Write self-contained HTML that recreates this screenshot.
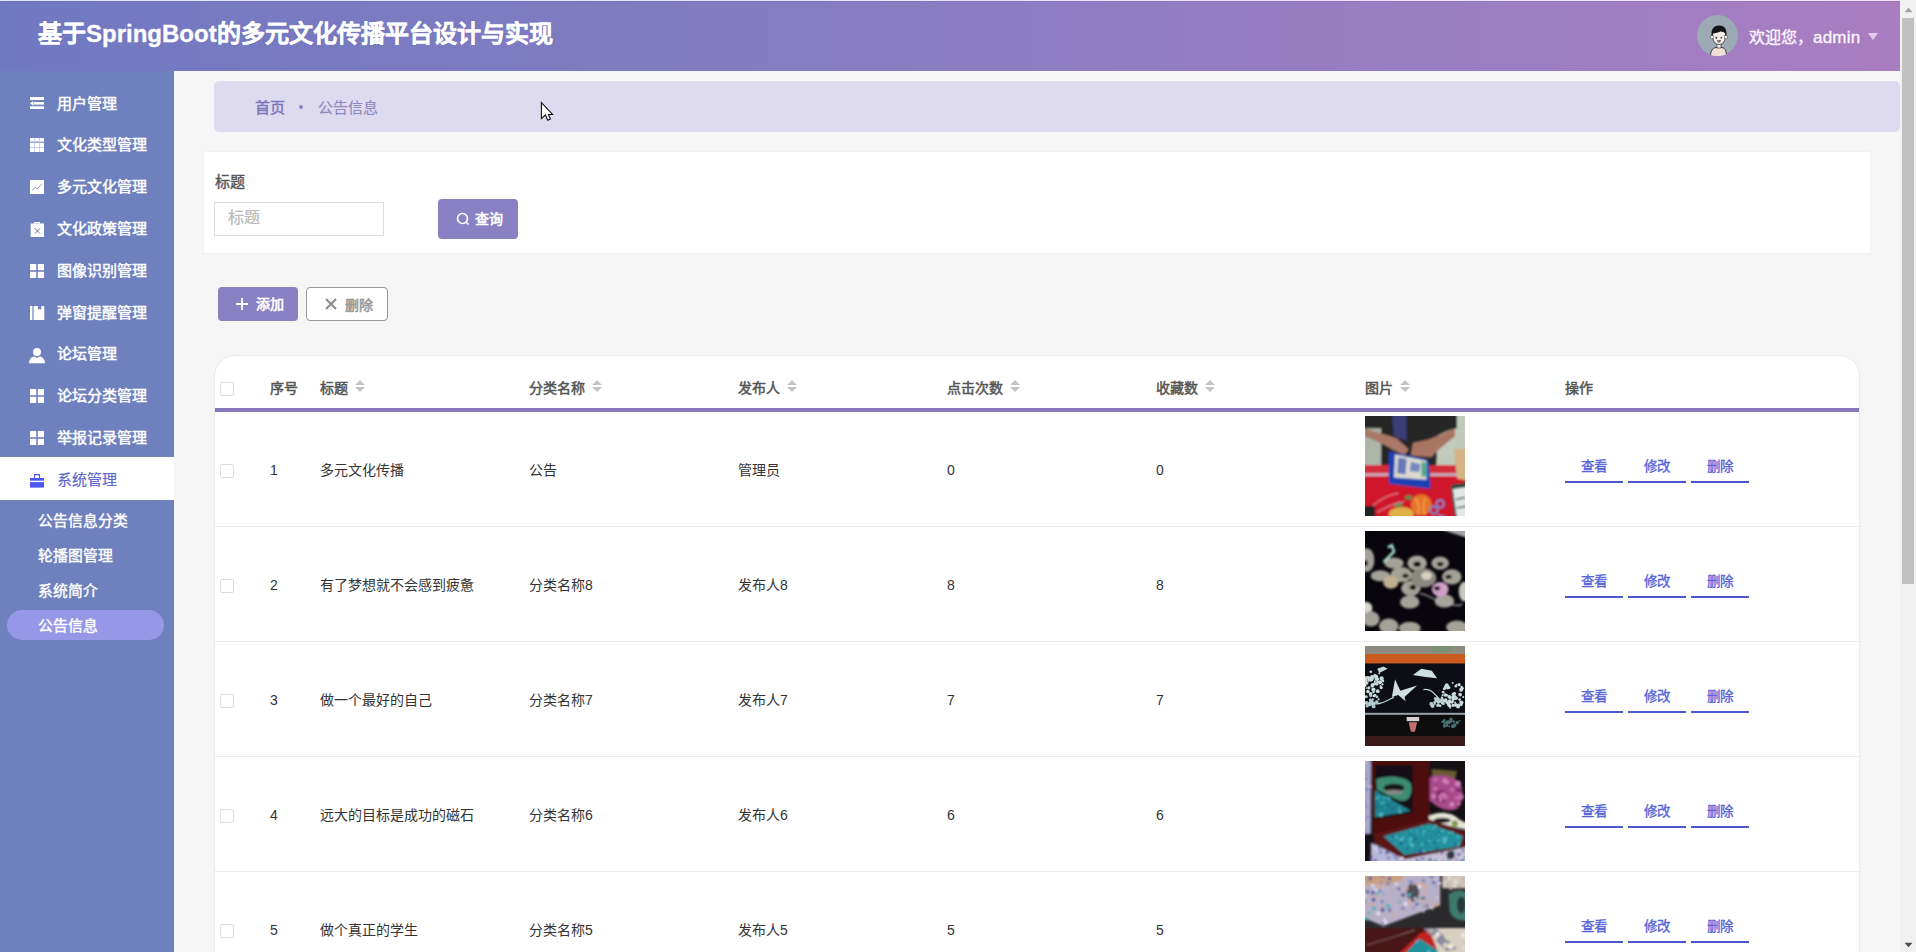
<!DOCTYPE html>
<html lang="zh-CN"><head><meta charset="utf-8">
<style>
*{margin:0;padding:0;box-sizing:border-box}
html,body{width:1916px;height:952px;overflow:hidden}
body{font-family:"Liberation Sans",sans-serif;background:#f6f6f6;position:relative;color:#333}
.a{position:absolute}
#hdr{left:0;top:0;width:1900px;height:71px;background:linear-gradient(90deg,#6f79c1 0%,#8a7dc2 50%,#a97ec1 100%);}
#topline{left:0;top:0;width:1916px;height:1px;background:linear-gradient(90deg,#e2e8fe,#f2e2fa)}
#topline2{left:0;top:1px;width:1900px;height:1px;background:rgba(40,30,80,0.08)}
#title{left:38px;top:14px;font-size:24px;font-weight:bold;-webkit-text-stroke:0.3px #fff;color:#fff;line-height:40px;white-space:nowrap}
#avatar{left:1697px;top:15px;width:41px;height:41px;border-radius:50%;background:#9caab6;overflow:hidden}
#welcome{left:1749px;top:27.5px;font-size:16px;color:#fff6ff;-webkit-text-stroke:0.3px #fff6ff;line-height:20px;white-space:nowrap;letter-spacing:0}
#caret{left:1868px;top:33px;width:0;height:0;border-left:5px solid transparent;border-right:5px solid transparent;border-top:7px solid #e2cdf0}
#side{left:0;top:71px;width:174px;height:881px;background:#6f80be}
.mi{position:absolute;left:0;width:174px;height:42px;color:#fff;font-size:15px;font-weight:normal;-webkit-text-stroke:0.45px #fff;line-height:42px}
.mi span{position:absolute;left:57px;top:0}
.mi svg{position:absolute;left:30px;top:14px}
.mi.act{color:#5a66cc;-webkit-text-stroke:0.15px #5a66cc}
#actbg{left:0;top:457px;width:174px;height:43px;background:#fff}
.sub{position:absolute;left:38px;color:#fff;font-size:14.8px;font-weight:normal;-webkit-text-stroke:0.4px #fff;line-height:20px;margin-top:0.8px}
#pill{left:7px;top:610px;width:157px;height:30px;border-radius:15px;background:#9598e6}
#scroll{left:1900px;top:0;width:16px;height:952px;background:#f1f1f1}
#thumb{left:1902px;top:18px;width:12px;height:566px;background:#c1c1c1}
#bc{left:214px;top:81px;width:1686px;height:51px;background:#dedbf1;border-radius:5px}
#bc1{left:255px;top:98px;font-size:15px;font-weight:normal;-webkit-text-stroke:0.5px #7f78b8;color:#7f78b8;line-height:20px}
#bcdot{left:299px;top:105px;width:4px;height:4px;border-radius:50%;background:#8a82bd}
#bc2{left:318px;top:98px;font-size:15px;-webkit-text-stroke:0.15px #8f88c0;color:#8f88c0;line-height:20px}
#search{left:204px;top:152px;width:1666px;height:101px;background:#fff;box-shadow:0 0 0 1px rgba(0,0,0,0.02)}
#lbl{left:215px;top:172px;font-size:15px;font-weight:normal;-webkit-text-stroke:0.4px #555;color:#555;line-height:20px}
#inp{left:214px;top:202px;width:170px;height:34px;border:1px solid #dcdcdc;background:#fff}
#inp span{position:absolute;left:13px;top:5px;font-size:16px;color:#b8b8b8;-webkit-text-stroke:0.2px #b8b8b8;line-height:20px}
.btn{position:absolute;border-radius:4px;font-size:14px;font-weight:normal;-webkit-text-stroke:0.6px currentColor;line-height:20px;white-space:nowrap}
#qbtn{left:438px;top:199px;width:80px;height:40px;background:#8a80c4;color:#fff}
#addbtn{left:218px;top:287px;width:80px;height:34px;background:#8a80c4;color:#fff}
#delbtn{left:306px;top:287px;width:82px;height:34px;background:#fff;border:1px solid #999;color:#999}
#tbl{left:215px;top:356px;width:1644px;height:600px;background:#fff;border-radius:20px 20px 0 0;box-shadow:0 0 0 1px rgba(0,0,0,0.035),0 0 3px rgba(0,0,0,0.04)}
#tline{left:215px;top:408px;width:1644px;height:4px;background:#8677c0}
.th{position:absolute;top:377.5px;font-size:14px;font-weight:normal;-webkit-text-stroke:0.5px #555;color:#555;line-height:20px;white-space:nowrap}
.sort{display:inline-block;vertical-align:top;margin-left:7px;margin-top:2.5px;-webkit-text-stroke:0}
.cb{position:absolute;left:220px;width:14px;height:14px;border:1px solid #dcdcdc;border-radius:2px;background:#fff}
.sep{position:absolute;left:215px;width:1644px;height:1px;background:#ebebeb}
.td{position:absolute;font-size:14px;color:#333;line-height:20px;white-space:nowrap}
.img{position:absolute;left:1365px;width:100px;height:100px;overflow:hidden}
.op{position:absolute;width:58px;height:24px;border-bottom:2px solid #4b58cc;color:#5865d8;font-size:13.5px;font-weight:normal;-webkit-text-stroke:0.35px #5865d8;text-align:center;line-height:16.5px}
</style></head><body>
<div id="hdr" class="a"></div>
<div id="topline" class="a"></div>
<div id="topline2" class="a"></div>
<div id="title" class="a">基于SpringBoot的多元文化传播平台设计与实现</div>
<div id="avatar" class="a"><svg width="42" height="42" viewBox="0 0 42 42"><path d="M13.5 42 C13.5 36 15.5 33 19 32.5 L25 32.5 C28 33 29.5 36 29.5 42Z" fill="#f2e0d8" stroke="#222" stroke-width="0.8"/><rect x="20" y="28.5" width="4" height="4.5" fill="#f6eee6" stroke="#222" stroke-width="0.6"/><path d="M15.5 16 L15.5 20 C15.5 26 18 29.5 22 29.5 C26 29.5 28.5 26 28.5 20 L28.5 16Z" fill="#f4ece4" stroke="#222" stroke-width="0.7"/><rect x="13.8" y="20.8" width="3" height="2.6" fill="#eef0ea" stroke="#333" stroke-width="0.4"/><rect x="27.2" y="20.8" width="3" height="2.6" fill="#eef0ea" stroke="#333" stroke-width="0.4"/><path d="M14.8 21.5 C13.5 14 17 10.5 22 10.5 C27 10.5 30.5 13.5 29.3 21.5 L28.3 18.5 C27 17 25 16.3 23.5 16.3 C21.5 17.8 18 18.2 16 18.5Z" fill="#141414"/><ellipse cx="19.3" cy="22.7" rx="0.9" ry="1" fill="#333"/><ellipse cx="24.3" cy="22.7" rx="0.9" ry="1" fill="#555"/><path d="M19.8 25.3 Q22 24.8 24.2 25.3 Q23.5 27.8 22 27.8 Q20.5 27.8 19.8 25.3Z" fill="#7a6e6a"/></svg></div>
<div id="welcome" class="a">欢迎您，<span style="font-size:17px;letter-spacing:0.2px">admin</span></div>
<div id="caret" class="a"></div>

<div id="side" class="a"></div>
<div id="actbg" class="a"></div>
<div class="mi" style="top:82.6px"><svg width="14" height="12" viewBox="0 0 14 12" style="top:14.4px"><rect x="0" y="0" width="14" height="3" fill="#fff"/><rect x="3.8" y="5" width="10.2" height="2.6" fill="#fff"/><path d="M0 6.3 L3.4 3.9 L3.4 8.7Z" fill="#fff"/><rect x="0" y="9.3" width="14" height="2.7" fill="#fff"/></svg><span>用户管理</span></div>
<div class="mi" style="top:124.4px"><svg width="14" height="14" viewBox="0 0 14 14"><rect width="14" height="14" fill="#fff"/><rect x="0" y="3.6" width="14" height="1.1" fill="#6f80be"/><rect x="4.2" y="0" width="0.7" height="14" fill="#b8c0e0"/><rect x="9.1" y="0" width="0.7" height="14" fill="#b8c0e0"/><rect x="0" y="9.2" width="14" height="0.7" fill="#b8c0e0"/></svg><span>文化类型管理</span></div>
<div class="mi" style="top:166.2px"><svg width="14" height="14" viewBox="0 0 14 14"><rect width="14" height="14" fill="#fff"/><path d="M2.3 10.3 L5.3 7.4 L7.3 8.8 L10.6 5.2" stroke="#8088a8" stroke-width="0.9" fill="none"/><circle cx="11.5" cy="4.2" r="0.6" fill="#8088a8"/></svg><span>多元文化管理</span></div>
<div class="mi" style="top:208.0px"><svg width="14" height="15" viewBox="0 0 14 15"><path d="M0.7 1.5 H4 V0 H10 V1.5 H14 V15 H0.7Z" fill="#fff"/><path d="M4.3 1.6 H9.7" stroke="#c8cce8" stroke-width="0.8"/><path d="M4.8 6.3 L10 11.6 M10 6.3 L4.8 11.6" stroke="#5a6070" stroke-width="0.9"/></svg><span>文化政策管理</span></div>
<div class="mi" style="top:249.8px"><svg width="14" height="14" viewBox="0 0 14 14"><g fill="#fff"><rect x="0" y="0" width="6.2" height="6.2"/><rect x="7.8" y="0" width="6.2" height="6.2"/><rect x="0" y="7.8" width="6.2" height="6.2"/><rect x="7.8" y="7.8" width="6.2" height="6.2"/></g></svg><span>图像识别管理</span></div>
<div class="mi" style="top:291.6px"><svg width="15" height="14" viewBox="0 0 15 14"><g fill="#fff"><rect x="0" y="0" width="2.4" height="14"/><path d="M3.6 0 H14.3 V14 H3.6Z"/></g><path d="M8 0 V4 L9.6 2.8 L11.2 4 V0Z" fill="#6f80be"/></svg><span>弹窗提醒管理</span></div>
<div class="mi" style="top:333.4px"><svg width="17" height="16" viewBox="0 0 17 16" style="left:29px;top:14.8px"><circle cx="8" cy="4" r="4" fill="#fff"/><path d="M0 15.2 C0 11 3 8.4 5.5 8.4 L8 10 L10.5 8.4 C13 8.4 16 11 16 15.2Z" fill="#fff"/></svg><span>论坛管理</span></div>
<div class="mi" style="top:375.2px"><svg width="14" height="14" viewBox="0 0 14 14"><g fill="#fff"><rect x="0" y="0" width="6.2" height="6.2"/><rect x="7.8" y="0" width="6.2" height="6.2"/><rect x="0" y="7.8" width="6.2" height="6.2"/><rect x="7.8" y="7.8" width="6.2" height="6.2"/></g></svg><span>论坛分类管理</span></div>
<div class="mi" style="top:417.0px"><svg width="14" height="14" viewBox="0 0 14 14"><g fill="#fff"><rect x="0" y="0" width="6.2" height="6.2"/><rect x="7.8" y="0" width="6.2" height="6.2"/><rect x="0" y="7.8" width="6.2" height="6.2"/><rect x="7.8" y="7.8" width="6.2" height="6.2"/></g></svg><span>举报记录管理</span></div>
<div class="mi act" style="top:458.8px"><svg width="14" height="14" viewBox="0 0 14 14" style="top:15.4px"><g fill="#4a58ee"><path d="M4 0 H10 V4 H9 V1.2 H5 V4 H4Z"/><rect x="0" y="4" width="14" height="2.7"/><rect x="0" y="8.1" width="14" height="5.5"/></g></svg><span>系统管理</span></div>
<div id="pill" class="a"></div>
<div class="sub" style="top:510px">公告信息分类</div>
<div class="sub" style="top:545px">轮播图管理</div>
<div class="sub" style="top:580px">系统简介</div>
<div class="sub" style="top:615px">公告信息</div>


<div id="scroll" class="a"></div>
<div id="thumb" class="a"></div>
<svg class="a" style="left:1904px;top:7px" width="9" height="6" viewBox="0 0 9 6"><path d="M0.5 5.2 L4.5 0.8 L8.5 5.2Z" fill="#a3a3a3"/></svg>
<svg class="a" style="left:1904px;top:942px" width="9" height="6" viewBox="0 0 9 6"><path d="M0.5 0.8 L4.5 5.2 L8.5 0.8Z" fill="#505050"/></svg>

<div id="bc" class="a"></div>
<div id="bc1" class="a">首页</div>
<div id="bcdot" class="a"></div>
<div id="bc2" class="a">公告信息</div>

<div id="search" class="a"></div>
<div id="lbl" class="a">标题</div>
<div id="inp" class="a"><span>标题</span></div>
<div id="qbtn" class="btn"><svg class="a" style="left:18px;top:13px" width="14" height="14" viewBox="0 0 14 14"><circle cx="6.5" cy="6.5" r="5" stroke="#fff" stroke-width="1.6" fill="none"/><path d="M10 10 L12.5 12.5" stroke="#fff" stroke-width="1.6"/></svg><span class="a" style="left:37px;top:9.5px">查询</span></div>
<div id="addbtn" class="btn"><svg class="a" style="left:17px;top:10px" width="14" height="14" viewBox="0 0 14 14"><path d="M7 1 V13 M1 7 H13" stroke="#fff" stroke-width="1.8"/></svg><span class="a" style="left:38px;top:7px">添加</span></div>
<div id="delbtn" class="btn"><svg class="a" style="left:18px;top:10px" width="12" height="12" viewBox="0 0 12 12"><path d="M1 1 L11 11 M11 1 L1 11" stroke="#8a8a8a" stroke-width="2"/></svg><span class="a" style="left:37.5px;top:6.5px">删除</span></div>

<div id="tbl" class="a"></div>
<div id="tline" class="a"></div>
<div class="cb" style="top:382px"></div>
<div class="th" style="left:270px">序号</div>
<div class="th" style="left:320px">标题<svg class="sort" width="10" height="13" viewBox="0 0 10 13"><path d="M5 0 L10 5 H0Z M0 7 H10 L5 12Z" fill="#c4c4c4"/></svg></div>
<div class="th" style="left:529px">分类名称<svg class="sort" width="10" height="13" viewBox="0 0 10 13"><path d="M5 0 L10 5 H0Z M0 7 H10 L5 12Z" fill="#c4c4c4"/></svg></div>
<div class="th" style="left:738px">发布人<svg class="sort" width="10" height="13" viewBox="0 0 10 13"><path d="M5 0 L10 5 H0Z M0 7 H10 L5 12Z" fill="#c4c4c4"/></svg></div>
<div class="th" style="left:947px">点击次数<svg class="sort" width="10" height="13" viewBox="0 0 10 13"><path d="M5 0 L10 5 H0Z M0 7 H10 L5 12Z" fill="#c4c4c4"/></svg></div>
<div class="th" style="left:1156px">收藏数<svg class="sort" width="10" height="13" viewBox="0 0 10 13"><path d="M5 0 L10 5 H0Z M0 7 H10 L5 12Z" fill="#c4c4c4"/></svg></div>
<div class="th" style="left:1365px">图片<svg class="sort" width="10" height="13" viewBox="0 0 10 13"><path d="M5 0 L10 5 H0Z M0 7 H10 L5 12Z" fill="#c4c4c4"/></svg></div>
<div class="th" style="left:1565px">操作</div>
<div class="cb" style="top:464px"></div>
<div class="td" style="left:270px;top:460px">1</div>
<div class="td" style="left:320px;top:460px">多元文化传播</div>
<div class="td" style="left:529px;top:460px">公告</div>
<div class="td" style="left:738px;top:460px">管理员</div>
<div class="td" style="left:947px;top:460px">0</div>
<div class="td" style="left:1156px;top:460px">0</div>
<div class="img" style="top:416px"><svg width="100" height="100" viewBox="0 0 100 100"><defs><filter id="b1" x="-10%" y="-10%" width="120%" height="120%"><feGaussianBlur stdDeviation="0.8"/></filter></defs><rect width="100" height="100" fill="#262626"/><g transform="translate(-2.5,-2.5) scale(1.05)"><g filter="url(#b1)"><path d="M72 0 H100 V52 H70Z" fill="#c2cabe"/><path d="M0 14 H18 V50 H0Z" fill="#aeb6ac"/><path d="M0 0 H90 V14 C80 16 70 22 62 26 L58 50 H18 V14 L0 14Z" fill="#252525"/><path d="M28 0 H42 V26 L30 22Z" fill="#3c3c78"/><path d="M2 14 C12 18 24 20 33 24 L44 34 L40 40 L28 34 C18 28 8 24 2 22Z" fill="#a87868"/><path d="M88 14 C80 18 70 22 62 25 L48 28 L46 40 L66 42 C70 36 80 28 88 22Z" fill="#a87464"/><path d="M0 49 H100 V100 H0Z" fill="#d0182a"/><path d="M0 49 H95 V57 H0Z" fill="#d42a3a"/><path d="M0 57 H96 V59.5 H0Z" fill="#c8b0c0"/><path d="M87 34 L96 33 L100 36 V64 L90 62Z" fill="#d4b486"/><path d="M25 36 L63 44 L65 72 L25 67Z" fill="#1c40b4"/><path d="M31 39 L61 45 L61 63 L30 61Z" fill="#dcdcd0"/><path d="M34 42 L42 43 L41 58 L33 57Z" fill="#6878b8"/><path d="M46 46 L55 48 L54 56 L45 55Z" fill="#7888c0"/><path d="M56 46 L61 47 L61 60 L56 60Z" fill="#50a890"/><circle cx="56" cy="87" r="10" fill="#e67426"/><path d="M50 80 Q56 90 52 97 M60 80 Q56 90 60 97" stroke="#f0a050" stroke-width="1.5" fill="none"/><ellipse cx="37" cy="96" rx="12" ry="7" fill="#e0b048"/><ellipse cx="34" cy="87" rx="4" ry="2" fill="#50904a"/><ellipse cx="44" cy="80" rx="3.5" ry="2" fill="#50904a"/><circle cx="74" cy="86" r="3.5" fill="none" stroke="#6090e0" stroke-width="1.6"/><circle cx="68" cy="92" r="3.5" fill="none" stroke="#6090e0" stroke-width="1.6"/><path d="M72 97 L80 100" stroke="#6090e0" stroke-width="2"/><path d="M84 68 L100 66 V100 H88Z" fill="#1e4a40"/><path d="M86 72 L100 70 V100 H90Z" fill="#e4e8e4"/><path d="M89 82 L98 80 M90 90 L100 88" stroke="#2a5a48" stroke-width="1.5"/><rect x="0" y="88" width="12" height="12" fill="#202020"/><path d="M10 88 C16 82 24 78 34 76 M14 94 C22 90 28 86 40 84" stroke="#e8a0b0" stroke-width="0.9" fill="none"/></g></g></svg>
</div>
<div class="op" style="left:1565px;top:459px">查看</div>
<div class="op" style="left:1628px;top:459px">修改</div>
<div class="op" style="left:1691px;top:459px">删除</div>
<div class="sep" style="top:526px"></div>
<div class="cb" style="top:579px"></div>
<div class="td" style="left:270px;top:575px">2</div>
<div class="td" style="left:320px;top:575px">有了梦想就不会感到疲惫</div>
<div class="td" style="left:529px;top:575px">分类名称8</div>
<div class="td" style="left:738px;top:575px">发布人8</div>
<div class="td" style="left:947px;top:575px">8</div>
<div class="td" style="left:1156px;top:575px">8</div>
<div class="img" style="top:531px">
<svg width="100" height="100" viewBox="0 0 100 100"><defs><filter id="b2" x="-10%" y="-10%" width="120%" height="120%"><feGaussianBlur stdDeviation="0.9"/></filter></defs><rect width="100" height="100" fill="#08060c"/><g transform="translate(-2.5,-2.5) scale(1.05)"><g filter="url(#b2)"><path d="M72 0 L100 0 L100 9Z" fill="#a9a3ac"/><g fill="#a4a298"><ellipse cx="52" cy="33" rx="9.3" ry="7.3"/><ellipse cx="74" cy="33" rx="8.3" ry="6.3"/><ellipse cx="37" cy="44" rx="10.3" ry="7.3"/><ellipse cx="85" cy="46" rx="9.3" ry="7.3"/><ellipse cx="46" cy="57" rx="9.3" ry="7.3"/><ellipse cx="58" cy="47" rx="12.3" ry="9.3" fill="#8a8880"/><ellipse cx="45" cy="70" rx="9.3" ry="6.3"/><ellipse cx="78" cy="69" rx="9.3" ry="6.3"/><ellipse cx="4" cy="30" rx="7.3" ry="11.3"/><ellipse cx="17" cy="45" rx="9.3" ry="5.3"/><ellipse cx="30" cy="33" rx="9.3" ry="5.3"/><ellipse cx="27" cy="51" rx="7.3" ry="6.3" fill="#c0b090"/><ellipse cx="3" cy="76" rx="6.3" ry="6.3" fill="#d8d8d0"/><ellipse cx="8" cy="86" rx="8.3" ry="7.3"/><ellipse cx="25" cy="93" rx="9.3" ry="7.3"/><ellipse cx="45" cy="95" rx="10.3" ry="6.3"/><ellipse cx="90" cy="94" rx="10.3" ry="6.3"/><ellipse cx="97" cy="60" rx="5.3" ry="9.3" fill="#c8c8c0"/></g><ellipse cx="74" cy="58" rx="8" ry="7" fill="#d0a0c8"/><ellipse cx="61" cy="45" rx="5" ry="4" fill="#d8d0c0"/><path d="M24 18 L28 16 L30 22 L20 32" stroke="#a8e0d0" stroke-width="2.5" fill="none"/><g fill="#08060c"><ellipse cx="52" cy="34" rx="3.5" ry="2.5"/><ellipse cx="74" cy="34" rx="3" ry="2"/><ellipse cx="41" cy="45" rx="3" ry="2"/><ellipse cx="82" cy="46" rx="3" ry="2"/><ellipse cx="48" cy="56" rx="3" ry="2.5"/><ellipse cx="71" cy="57" rx="3" ry="2"/><ellipse cx="2" cy="33" rx="3" ry="3"/></g><path d="M55 62 C62 62 66 68 75 70 C85 72 90 75 95 72" stroke="#b0a8b0" stroke-width="1.2" fill="none"/></g></g></svg>
</div>
<div class="op" style="left:1565px;top:574px">查看</div>
<div class="op" style="left:1628px;top:574px">修改</div>
<div class="op" style="left:1691px;top:574px">删除</div>
<div class="sep" style="top:641px"></div>
<div class="cb" style="top:694px"></div>
<div class="td" style="left:270px;top:690px">3</div>
<div class="td" style="left:320px;top:690px">做一个最好的自己</div>
<div class="td" style="left:529px;top:690px">分类名称7</div>
<div class="td" style="left:738px;top:690px">发布人7</div>
<div class="td" style="left:947px;top:690px">7</div>
<div class="td" style="left:1156px;top:690px">7</div>
<div class="img" style="top:646px"><svg width="100" height="100" viewBox="0 0 100 100"><defs><filter id="b3" x="-10%" y="-10%" width="120%" height="120%"><feGaussianBlur stdDeviation="0.6"/></filter></defs><rect width="100" height="100" fill="#101010"/><g transform="translate(-2.5,-2.5) scale(1.05)"><g filter="url(#b3)"><rect x="0" y="0" width="100" height="11" fill="#8a8c80"/><ellipse cx="75" cy="4" rx="10" ry="5" fill="#7a9070"/><rect x="0" y="10" width="100" height="10" fill="#cc5a1e"/><rect x="0" y="19" width="100" height="48" fill="#0c0e14"/><rect x="0" y="66" width="100" height="2" fill="#9aa0a8"/><rect x="0" y="68" width="100" height="20" fill="#0a0a0c"/><rect x="0" y="88" width="100" height="12" fill="#3a1a1a"/><circle cx="10.5" cy="46.3" r="1.2" fill="#c8dcdc"/><circle cx="4.0" cy="32.5" r="0.9" fill="#c8dcdc"/><circle cx="19.0" cy="38.9" r="1.1" fill="#c8dcdc"/><circle cx="11.0" cy="49.9" r="1.4" fill="#c8dcdc"/><circle cx="13.3" cy="31.4" r="1.6" fill="#c8dcdc"/><circle cx="14.5" cy="45.4" r="1.8" fill="#c8dcdc"/><circle cx="1.7" cy="36.5" r="1.6" fill="#c8dcdc"/><circle cx="17.8" cy="42.0" r="1.5" fill="#c8dcdc"/><circle cx="9.6" cy="39.4" r="1.8" fill="#c8dcdc"/><circle cx="1.9" cy="39.7" r="1.9" fill="#c8dcdc"/><circle cx="7.9" cy="26.9" r="1.3" fill="#c8dcdc"/><circle cx="11.9" cy="31.0" r="1.9" fill="#c8dcdc"/><circle cx="11.8" cy="36.0" r="1.0" fill="#c8dcdc"/><circle cx="12.0" cy="49.5" r="1.3" fill="#c8dcdc"/><circle cx="6.6" cy="33.8" r="1.4" fill="#c8dcdc"/><circle cx="6.0" cy="42.2" r="1.5" fill="#c8dcdc"/><circle cx="1.9" cy="32.3" r="1.6" fill="#c8dcdc"/><circle cx="18.2" cy="33.3" r="2.0" fill="#c8dcdc"/><circle cx="8.4" cy="34.4" r="1.8" fill="#c8dcdc"/><circle cx="19.2" cy="35.5" r="1.5" fill="#c8dcdc"/><circle cx="9.1" cy="33.4" r="1.8" fill="#c8dcdc"/><circle cx="5.8" cy="35.5" r="0.9" fill="#c8dcdc"/><circle cx="16.0" cy="28.5" r="0.9" fill="#c8dcdc"/><circle cx="11.8" cy="31.3" r="1.0" fill="#c8dcdc"/><circle cx="7.7" cy="47.9" r="1.8" fill="#c8dcdc"/><circle cx="17.2" cy="40.5" r="0.9" fill="#c8dcdc"/><circle cx="9.0" cy="31.9" r="1.9" fill="#c8dcdc"/><circle cx="16.6" cy="37.0" r="2.0" fill="#c8dcdc"/><circle cx="9.2" cy="40.4" r="1.5" fill="#c8dcdc"/><circle cx="13.7" cy="38.9" r="1.3" fill="#c8dcdc"/><circle cx="7.5" cy="35.5" r="0.9" fill="#c8dcdc"/><circle cx="13.4" cy="33.6" r="2.0" fill="#c8dcdc"/><circle cx="14.4" cy="34.0" r="1.4" fill="#c8dcdc"/><circle cx="2.4" cy="36.8" r="1.5" fill="#c8dcdc"/><circle cx="3.0" cy="34.7" r="1.9" fill="#c8dcdc"/><circle cx="4.0" cy="37.7" r="1.7" fill="#c8dcdc"/><circle cx="10.4" cy="43.8" r="2.0" fill="#c8dcdc"/><circle cx="3.1" cy="36.9" r="0.8" fill="#c8dcdc"/><circle cx="3.8" cy="42.4" r="0.8" fill="#c8dcdc"/><circle cx="4.3" cy="31.9" r="0.9" fill="#c8dcdc"/><circle cx="5.6" cy="32.6" r="1.6" fill="#c8dcdc"/><circle cx="5.1" cy="45.8" r="1.7" fill="#c8dcdc"/><circle cx="11.8" cy="38.3" r="1.6" fill="#c8dcdc"/><circle cx="14.2" cy="36.8" r="1.3" fill="#c8dcdc"/><circle cx="5.8" cy="34.7" r="1.2" fill="#c8dcdc"/><circle cx="6.3" cy="58.0" r="1.5" fill="#b0c8c8"/><circle cx="6.6" cy="58.2" r="1.7" fill="#b0c8c8"/><circle cx="13.6" cy="55.7" r="1.7" fill="#b0c8c8"/><circle cx="6.8" cy="57.3" r="1.8" fill="#b0c8c8"/><circle cx="8.2" cy="57.2" r="1.3" fill="#b0c8c8"/><circle cx="7.3" cy="53.6" r="1.2" fill="#b0c8c8"/><circle cx="4.4" cy="59.7" r="1.3" fill="#b0c8c8"/><circle cx="9.7" cy="53.4" r="1.2" fill="#b0c8c8"/><circle cx="3.6" cy="50.5" r="1.3" fill="#b0c8c8"/><circle cx="8.4" cy="56.7" r="1.4" fill="#b0c8c8"/><circle cx="10.6" cy="59.9" r="1.8" fill="#b0c8c8"/><circle cx="9.5" cy="57.5" r="1.8" fill="#b0c8c8"/><circle cx="3.6" cy="50.9" r="1.2" fill="#b0c8c8"/><circle cx="10.6" cy="57.1" r="1.8" fill="#b0c8c8"/><circle cx="7.4" cy="58.1" r="1.3" fill="#b0c8c8"/><circle cx="3.9" cy="56.7" r="1.9" fill="#b0c8c8"/><circle cx="8.2" cy="55.2" r="1.9" fill="#b0c8c8"/><circle cx="13.8" cy="50.9" r="1.3" fill="#b0c8c8"/><circle cx="15.3" cy="53.2" r="1.1" fill="#b0c8c8"/><circle cx="7.8" cy="49.6" r="1.6" fill="#b0c8c8"/><circle cx="80.3" cy="49.3" r="1.2" fill="#c8dcdc"/><circle cx="86.3" cy="52.6" r="1.5" fill="#c8dcdc"/><circle cx="83.6" cy="61.1" r="0.9" fill="#c8dcdc"/><circle cx="93.9" cy="44.1" r="1.9" fill="#c8dcdc"/><circle cx="95.0" cy="42.6" r="1.5" fill="#c8dcdc"/><circle cx="96.0" cy="50.9" r="1.0" fill="#c8dcdc"/><circle cx="83.1" cy="59.7" r="1.4" fill="#c8dcdc"/><circle cx="76.1" cy="56.5" r="1.5" fill="#c8dcdc"/><circle cx="83.1" cy="54.8" r="1.8" fill="#c8dcdc"/><circle cx="75.7" cy="51.6" r="1.2" fill="#c8dcdc"/><circle cx="88.7" cy="58.4" r="1.8" fill="#c8dcdc"/><circle cx="91.0" cy="59.9" r="1.9" fill="#c8dcdc"/><circle cx="89.7" cy="39.1" r="0.8" fill="#c8dcdc"/><circle cx="78.4" cy="41.4" r="0.9" fill="#c8dcdc"/><circle cx="85.3" cy="55.9" r="1.4" fill="#c8dcdc"/><circle cx="79.2" cy="53.9" r="1.7" fill="#c8dcdc"/><circle cx="88.1" cy="50.0" r="1.0" fill="#c8dcdc"/><circle cx="87.7" cy="51.8" r="2.0" fill="#c8dcdc"/><circle cx="87.7" cy="47.6" r="1.4" fill="#c8dcdc"/><circle cx="83.6" cy="55.9" r="1.2" fill="#c8dcdc"/><circle cx="80.7" cy="42.5" r="1.2" fill="#c8dcdc"/><circle cx="88.2" cy="56.2" r="0.9" fill="#c8dcdc"/><circle cx="76.8" cy="46.4" r="1.3" fill="#c8dcdc"/><circle cx="89.7" cy="52.2" r="1.2" fill="#c8dcdc"/><circle cx="77.8" cy="43.2" r="1.3" fill="#c8dcdc"/><circle cx="88.9" cy="40.7" r="1.3" fill="#c8dcdc"/><circle cx="80.5" cy="56.1" r="1.6" fill="#c8dcdc"/><circle cx="77.5" cy="55.0" r="1.4" fill="#c8dcdc"/><circle cx="86.3" cy="58.9" r="1.6" fill="#c8dcdc"/><circle cx="92.5" cy="53.4" r="1.3" fill="#c8dcdc"/><circle cx="94.4" cy="41.4" r="1.2" fill="#c8dcdc"/><circle cx="94.3" cy="43.2" r="1.1" fill="#c8dcdc"/><circle cx="82.7" cy="50.8" r="1.8" fill="#c8dcdc"/><circle cx="80.2" cy="39.7" r="1.8" fill="#c8dcdc"/><circle cx="81.1" cy="40.6" r="1.5" fill="#c8dcdc"/><circle cx="93.0" cy="55.7" r="0.8" fill="#c8dcdc"/><circle cx="92.4" cy="58.7" r="0.9" fill="#c8dcdc"/><circle cx="88.5" cy="51.8" r="1.9" fill="#c8dcdc"/><circle cx="86.5" cy="51.2" r="1.8" fill="#c8dcdc"/><circle cx="93.8" cy="58.1" r="1.6" fill="#c8dcdc"/><circle cx="92.0" cy="39.2" r="1.5" fill="#c8dcdc"/><circle cx="86.5" cy="48.3" r="1.7" fill="#c8dcdc"/><circle cx="76.2" cy="49.2" r="0.9" fill="#c8dcdc"/><circle cx="85.9" cy="37.5" r="0.9" fill="#c8dcdc"/><circle cx="82.2" cy="58.2" r="1.8" fill="#c8dcdc"/><circle cx="86.2" cy="54.6" r="1.1" fill="#c8dcdc"/><circle cx="78.4" cy="42.7" r="1.3" fill="#c8dcdc"/><circle cx="81.4" cy="55.5" r="1.2" fill="#c8dcdc"/><circle cx="83.6" cy="51.4" r="1.4" fill="#c8dcdc"/><circle cx="93.0" cy="48.7" r="1.7" fill="#c8dcdc"/><circle cx="91.1" cy="58.8" r="1.7" fill="#c8dcdc"/><circle cx="82.3" cy="42.2" r="1.4" fill="#c8dcdc"/><circle cx="79.0" cy="40.5" r="1.0" fill="#c8dcdc"/><circle cx="94.3" cy="56.2" r="1.9" fill="#c8dcdc"/><circle cx="78.7" cy="49.1" r="1.7" fill="#c8dcdc"/><circle cx="73.4" cy="59.1" r="1.0" fill="#b8d0d0"/><circle cx="68.6" cy="55.7" r="1.1" fill="#b8d0d0"/><circle cx="69.2" cy="52.5" r="1.2" fill="#b8d0d0"/><circle cx="70.7" cy="54.2" r="1.8" fill="#b8d0d0"/><circle cx="68.9" cy="55.9" r="1.1" fill="#b8d0d0"/><circle cx="77.1" cy="57.5" r="1.3" fill="#b8d0d0"/><circle cx="74.0" cy="59.4" r="1.2" fill="#b8d0d0"/><circle cx="72.4" cy="55.5" r="2.0" fill="#b8d0d0"/><circle cx="66.2" cy="57.5" r="1.4" fill="#b8d0d0"/><circle cx="75.6" cy="53.2" r="1.5" fill="#b8d0d0"/><circle cx="65.5" cy="57.5" r="1.8" fill="#b8d0d0"/><circle cx="66.6" cy="59.4" r="2.0" fill="#b8d0d0"/><circle cx="68.8" cy="57.4" r="1.1" fill="#b8d0d0"/><circle cx="70.7" cy="53.1" r="2.0" fill="#b8d0d0"/><circle cx="74.1" cy="55.3" r="1.0" fill="#b8d0d0"/><circle cx="71.8" cy="58.8" r="1.6" fill="#b8d0d0"/><circle cx="76.7" cy="53.4" r="1.1" fill="#b8d0d0"/><circle cx="74.6" cy="55.1" r="1.3" fill="#b8d0d0"/><circle cx="83.6" cy="75.1" r="0.9" fill="#4a7070"/><circle cx="86.9" cy="74.3" r="1.2" fill="#4a7070"/><circle cx="75.7" cy="74.5" r="0.8" fill="#4a7070"/><circle cx="80.3" cy="78.1" r="1.4" fill="#4a7070"/><circle cx="86.2" cy="78.8" r="1.9" fill="#4a7070"/><circle cx="77.6" cy="77.8" r="0.9" fill="#4a7070"/><circle cx="82.5" cy="79.1" r="0.9" fill="#4a7070"/><circle cx="92.6" cy="73.5" r="0.9" fill="#4a7070"/><circle cx="90.2" cy="75.2" r="1.7" fill="#4a7070"/><circle cx="84.3" cy="74.1" r="1.6" fill="#4a7070"/><circle cx="78.0" cy="73.1" r="1.1" fill="#4a7070"/><circle cx="84.3" cy="72.1" r="1.6" fill="#4a7070"/><circle cx="80.8" cy="75.8" r="1.4" fill="#4a7070"/><circle cx="78.1" cy="78.6" r="1.6" fill="#4a7070"/><circle cx="80.1" cy="75.4" r="1.6" fill="#4a7070"/><circle cx="81.1" cy="75.0" r="1.9" fill="#4a7070"/><circle cx="82.1" cy="75.1" r="1.9" fill="#4a7070"/><circle cx="87.9" cy="77.6" r="1.7" fill="#4a7070"/><circle cx="77.1" cy="74.4" r="1.6" fill="#4a7070"/><circle cx="78.2" cy="76.5" r="1.0" fill="#4a7070"/><path d="M31 34 L36 45 L52 40 L40 51 L41 55 L34 49 L28 51Z" fill="#d0e0e0"/><path d="M48 30 L56 24 L66 26 L71 33 L60 32Z" fill="#d0e0e0"/><path d="M14 24 L20 22 L24 24 L16 28Z" fill="#c0d8d8"/><path d="M6 56 C15 60 22 55 30 51" stroke="#b8d0d0" stroke-width="1.3" fill="none"/><path d="M58 44 C66 42 70 50 75 55" stroke="#b8d0d0" stroke-width="1.3" fill="none"/><rect x="42" y="70" width="12" height="4" fill="#d8d0d0"/><path d="M44 75 L52 75 L50 84 L46 84Z" fill="#c07070"/></g></g></svg></div>
<div class="op" style="left:1565px;top:689px">查看</div>
<div class="op" style="left:1628px;top:689px">修改</div>
<div class="op" style="left:1691px;top:689px">删除</div>
<div class="sep" style="top:756px"></div>
<div class="cb" style="top:809px"></div>
<div class="td" style="left:270px;top:805px">4</div>
<div class="td" style="left:320px;top:805px">远大的目标是成功的磁石</div>
<div class="td" style="left:529px;top:805px">分类名称6</div>
<div class="td" style="left:738px;top:805px">发布人6</div>
<div class="td" style="left:947px;top:805px">6</div>
<div class="td" style="left:1156px;top:805px">6</div>
<div class="img" style="top:761px"><svg width="100" height="100" viewBox="0 0 100 100"><defs><filter id="b4" x="-10%" y="-10%" width="120%" height="120%"><feGaussianBlur stdDeviation="0.8"/></filter></defs><rect width="100" height="100" fill="#141014"/><g transform="translate(-2.5,-2.5) scale(1.05)"><g filter="url(#b4)"><rect x="0" y="0" width="8" height="72" fill="#a8a8cc"/><path d="M8 2 L64 0 L64 60 L10 72Z" fill="#4e1010"/><path d="M12 6 L48 6 L48 52 L12 58Z" fill="#121014"/><path d="M66 10 L90 12 L88 20 L66 18Z" fill="#6a5a30"/><path d="M13 20 C20 16 42 16 46 24 C48 34 44 42 36 40 C28 38 20 32 14 30Z" fill="#3e8c72"/><ellipse cx="30" cy="28" rx="10" ry="4" fill="#181818"/><ellipse cx="30" cy="32" rx="9" ry="2" fill="#8a8a88"/><path d="M12 30 L46 50 L12 56Z" fill="#1f8290"/><path d="M64 18 C70 14 85 16 92 22 C97 30 96 42 90 48 C80 52 70 46 64 40Z" fill="#a84a8a"/><ellipse cx="75" cy="36" rx="6" ry="6" fill="#7a2a60"/><path d="M63 55 C70 50 85 50 92 58 L100 62 L100 68 L64 60Z" fill="#e8e4d8"/><ellipse cx="76" cy="59" rx="8" ry="2.5" fill="#1a1a1a"/><circle cx="88" cy="62" r="3" fill="#7a9a40"/><path d="M10 72 L64 58 L100 70 L100 88 L40 96 L12 82Z" fill="#5a1414"/><path d="M20 74 L64 62 L96 74 L92 84 L40 92Z" fill="#24909c"/><path d="M8 80 L40 96 L40 100 L8 100Z" fill="#b8b8d8"/><path d="M40 96 L100 84 L100 100 L40 100Z" fill="#c8c0d8"/><circle cx="69.5" cy="64.2" r="1.1" fill="#60c8d0"/><circle cx="51.8" cy="69.2" r="1.2" fill="#40b8c8"/><circle cx="37.0" cy="80.8" r="1.5" fill="#2a5a9a"/><circle cx="62.3" cy="66.0" r="1.0" fill="#40b8c8"/><circle cx="63.4" cy="78.8" r="1.3" fill="#40b8c8"/><circle cx="64.2" cy="81.2" r="1.0" fill="#40b8c8"/><circle cx="62.9" cy="80.6" r="1.1" fill="#2a5a9a"/><circle cx="79.1" cy="76.0" r="1.5" fill="#60c8d0"/><circle cx="42.8" cy="85.8" r="1.3" fill="#1a6a80"/><circle cx="57.6" cy="72.3" r="1.0" fill="#40b8c8"/><circle cx="29.0" cy="74.5" r="1.4" fill="#1a6a80"/><circle cx="90.9" cy="74.7" r="1.6" fill="#40b8c8"/><circle cx="78.1" cy="79.2" r="1.5" fill="#60c8d0"/><circle cx="45.8" cy="72.5" r="1.1" fill="#2a5a9a"/><circle cx="40.5" cy="82.9" r="0.7" fill="#60c8d0"/><circle cx="82.5" cy="70.5" r="1.0" fill="#60c8d0"/><circle cx="49.7" cy="88.1" r="0.7" fill="#2a5a9a"/><circle cx="50.5" cy="70.3" r="0.7" fill="#2a5a9a"/><circle cx="85.7" cy="70.4" r="1.0" fill="#60c8d0"/><circle cx="71.9" cy="73.4" r="0.8" fill="#40b8c8"/><circle cx="37.7" cy="76.5" r="1.2" fill="#60c8d0"/><circle cx="60.6" cy="80.3" r="0.9" fill="#1a6a80"/><circle cx="72.5" cy="77.5" r="1.2" fill="#40b8c8"/><circle cx="54.7" cy="88.1" r="1.6" fill="#2a5a9a"/><circle cx="50.3" cy="73.8" r="1.1" fill="#2a5a9a"/><circle cx="27.7" cy="72.9" r="0.6" fill="#1a6a80"/><circle cx="66.7" cy="66.5" r="0.9" fill="#60c8d0"/><circle cx="65.8" cy="76.2" r="0.7" fill="#2a5a9a"/><circle cx="56.8" cy="64.6" r="0.7" fill="#60c8d0"/><circle cx="76.3" cy="76.4" r="1.3" fill="#40b8c8"/><circle cx="47.5" cy="82.7" r="1.5" fill="#60c8d0"/><circle cx="72.9" cy="69.8" r="1.0" fill="#1a6a80"/><circle cx="47.0" cy="68.7" r="1.1" fill="#60c8d0"/><circle cx="68.4" cy="80.4" r="1.4" fill="#1a6a80"/><circle cx="76.2" cy="68.8" r="1.1" fill="#60c8d0"/><circle cx="80.0" cy="76.2" r="0.8" fill="#60c8d0"/><circle cx="47.7" cy="68.6" r="0.8" fill="#1a6a80"/><circle cx="45.7" cy="76.5" r="1.6" fill="#40b8c8"/><circle cx="56.4" cy="81.6" r="1.4" fill="#40b8c8"/><circle cx="49.5" cy="83.3" r="0.8" fill="#1a6a80"/><circle cx="53.0" cy="81.1" r="0.7" fill="#2a5a9a"/><circle cx="55.2" cy="84.3" r="0.7" fill="#1a6a80"/><circle cx="70.0" cy="72.5" r="1.1" fill="#1a6a80"/><circle cx="36.2" cy="77.0" r="1.4" fill="#60c8d0"/><circle cx="39.7" cy="74.6" r="0.7" fill="#60c8d0"/><circle cx="88.2" cy="81.9" r="1.4" fill="#2a5a9a"/><circle cx="58.8" cy="88.2" r="1.4" fill="#40b8c8"/><circle cx="30.8" cy="80.6" r="0.7" fill="#40b8c8"/><circle cx="44.8" cy="77.6" r="1.2" fill="#40b8c8"/><circle cx="27.4" cy="75.6" r="0.6" fill="#40b8c8"/><circle cx="53.7" cy="80.4" r="1.1" fill="#1a6a80"/><circle cx="72.6" cy="75.6" r="1.1" fill="#2a5a9a"/><circle cx="58.6" cy="69.4" r="1.1" fill="#60c8d0"/><circle cx="35.4" cy="75.4" r="1.0" fill="#2a5a9a"/><circle cx="70.9" cy="85.5" r="1.5" fill="#1a6a80"/><circle cx="91.4" cy="81.3" r="1.0" fill="#60c8d0"/><circle cx="50.3" cy="76.6" r="1.6" fill="#1a6a80"/><circle cx="32.3" cy="74.9" r="1.1" fill="#60c8d0"/><circle cx="52.0" cy="72.7" r="0.7" fill="#60c8d0"/><circle cx="45.2" cy="80.7" r="1.1" fill="#40b8c8"/><circle cx="15.8" cy="53.9" r="0.8" fill="#40b0c0"/><circle cx="14.9" cy="37.1" r="1.5" fill="#40b0c0"/><circle cx="17.1" cy="53.9" r="1.2" fill="#5ac0c8"/><circle cx="23.1" cy="37.3" r="1.4" fill="#40b0c0"/><circle cx="23.5" cy="44.4" r="1.5" fill="#1a6a80"/><circle cx="18.2" cy="54.2" r="1.2" fill="#5ac0c8"/><circle cx="18.4" cy="42.3" r="1.5" fill="#40b0c0"/><circle cx="34.4" cy="46.9" r="1.3" fill="#5ac0c8"/><circle cx="29.2" cy="47.9" r="1.6" fill="#1a6a80"/><circle cx="18.8" cy="52.9" r="1.3" fill="#40b0c0"/><circle cx="25.8" cy="39.0" r="0.7" fill="#40b0c0"/><circle cx="12.5" cy="46.3" r="1.5" fill="#1a6a80"/><circle cx="20.2" cy="37.6" r="1.1" fill="#40b0c0"/><circle cx="24.4" cy="38.6" r="1.6" fill="#1a6a80"/><circle cx="22.5" cy="39.3" r="0.6" fill="#1a6a80"/><circle cx="14.9" cy="37.3" r="1.3" fill="#40b0c0"/><circle cx="12.8" cy="37.9" r="0.8" fill="#5ac0c8"/><circle cx="17.3" cy="53.2" r="1.4" fill="#5ac0c8"/><circle cx="25.2" cy="38.5" r="1.6" fill="#40b0c0"/><circle cx="21.7" cy="46.1" r="0.7" fill="#5ac0c8"/><circle cx="37.0" cy="51.1" r="0.7" fill="#5ac0c8"/><circle cx="35.3" cy="50.7" r="1.3" fill="#5ac0c8"/><circle cx="13.4" cy="46.6" r="1.6" fill="#1a6a80"/><circle cx="33.3" cy="46.3" r="1.3" fill="#1a6a80"/><circle cx="21.0" cy="41.9" r="0.7" fill="#5ac0c8"/><circle cx="24.8" cy="94.9" r="1.1" fill="#4a50a0"/><circle cx="9.5" cy="92.7" r="0.8" fill="#6a70b8"/><circle cx="12.7" cy="85.1" r="1.3" fill="#e8e0f0"/><circle cx="23.4" cy="89.7" r="1.6" fill="#4a50a0"/><circle cx="30.1" cy="93.5" r="0.9" fill="#6a70b8"/><circle cx="17.1" cy="89.3" r="1.4" fill="#6a70b8"/><circle cx="14.4" cy="99.6" r="1.5" fill="#4a50a0"/><circle cx="24.2" cy="99.9" r="1.6" fill="#e8e0f0"/><circle cx="14.7" cy="98.9" r="0.8" fill="#6a70b8"/><circle cx="10.9" cy="94.9" r="0.9" fill="#e8e0f0"/><circle cx="12.2" cy="96.4" r="1.1" fill="#4a50a0"/><circle cx="23.7" cy="89.0" r="0.9" fill="#4a50a0"/><circle cx="21.3" cy="87.5" r="0.7" fill="#e8e0f0"/><circle cx="8.1" cy="95.0" r="1.4" fill="#4a50a0"/><circle cx="8.4" cy="94.8" r="0.9" fill="#4a50a0"/><circle cx="20.6" cy="100.0" r="1.2" fill="#e8e0f0"/><circle cx="37.6" cy="95.1" r="1.5" fill="#e8e0f0"/><circle cx="11.3" cy="96.7" r="0.9" fill="#4a50a0"/><circle cx="16.0" cy="85.3" r="1.1" fill="#4a50a0"/><circle cx="32.7" cy="95.7" r="1.0" fill="#4a50a0"/><circle cx="37.2" cy="98.8" r="1.1" fill="#6a70b8"/><circle cx="10.6" cy="98.7" r="1.0" fill="#6a70b8"/><circle cx="32.1" cy="92.9" r="0.9" fill="#4a50a0"/><circle cx="13.5" cy="88.3" r="0.9" fill="#e8e0f0"/><circle cx="31.6" cy="99.5" r="0.9" fill="#6a70b8"/><circle cx="70.0" cy="97.0" r="1.2" fill="#3a8a98"/><circle cx="94.4" cy="99.9" r="1.0" fill="#e8e0f0"/><circle cx="88.6" cy="87.2" r="0.6" fill="#3a8a98"/><circle cx="63.0" cy="95.9" r="0.8" fill="#6a70b8"/><circle cx="56.7" cy="99.5" r="0.7" fill="#e8e0f0"/><circle cx="45.6" cy="98.3" r="1.0" fill="#3a8a98"/><circle cx="88.9" cy="99.5" r="0.7" fill="#3a8a98"/><circle cx="82.6" cy="98.3" r="1.1" fill="#3a8a98"/><circle cx="95.6" cy="97.2" r="1.5" fill="#3a8a98"/><circle cx="80.9" cy="99.1" r="1.3" fill="#3a8a98"/><circle cx="45.1" cy="96.4" r="0.6" fill="#e8e0f0"/><circle cx="54.0" cy="98.7" r="1.2" fill="#6a70b8"/><circle cx="97.7" cy="94.0" r="1.1" fill="#3a8a98"/><circle cx="75.0" cy="90.2" r="0.8" fill="#4a50a0"/><circle cx="67.6" cy="99.3" r="1.2" fill="#e8e0f0"/><circle cx="54.8" cy="99.4" r="1.3" fill="#6a70b8"/><circle cx="93.1" cy="94.4" r="0.7" fill="#e8e0f0"/><circle cx="80.0" cy="98.8" r="0.8" fill="#4a50a0"/><circle cx="81.7" cy="95.5" r="1.0" fill="#3a8a98"/><circle cx="51.9" cy="96.8" r="1.3" fill="#4a50a0"/><circle cx="52.3" cy="99.5" r="0.9" fill="#e8e0f0"/><circle cx="85.6" cy="88.7" r="1.6" fill="#3a8a98"/><circle cx="76.6" cy="98.3" r="1.1" fill="#4a50a0"/><circle cx="96.9" cy="86.3" r="1.0" fill="#e8e0f0"/><circle cx="64.9" cy="95.4" r="0.8" fill="#3a8a98"/><circle cx="93.9" cy="98.1" r="1.3" fill="#4a50a0"/><circle cx="95.9" cy="89.3" r="0.8" fill="#3a8a98"/><circle cx="61.1" cy="99.3" r="0.7" fill="#e8e0f0"/><circle cx="62.8" cy="96.3" r="0.9" fill="#3a8a98"/><circle cx="45.3" cy="95.3" r="0.8" fill="#3a8a98"/><circle cx="64.6" cy="97.0" r="1.4" fill="#4a50a0"/><circle cx="76.3" cy="89.8" r="0.9" fill="#4a50a0"/><circle cx="55.7" cy="95.5" r="0.9" fill="#6a70b8"/><circle cx="57.8" cy="95.5" r="1.2" fill="#4a50a0"/><circle cx="68.5" cy="99.3" r="1.6" fill="#3a8a98"/><circle cx="87.4" cy="98.6" r="1.4" fill="#e8e0f0"/><circle cx="95.7" cy="86.9" r="1.4" fill="#6a70b8"/><circle cx="89.4" cy="96.4" r="1.2" fill="#6a70b8"/><circle cx="91.7" cy="91.4" r="1.4" fill="#4a50a0"/><circle cx="70.7" cy="90.3" r="0.8" fill="#3a8a98"/><circle cx="0.5" cy="2.4" r="0.9" fill="#e8e0f0"/><circle cx="1.3" cy="30.7" r="0.6" fill="#4a50a0"/><circle cx="2.1" cy="6.1" r="0.6" fill="#e8e0f0"/><circle cx="7.9" cy="70.0" r="0.6" fill="#4a50a0"/><circle cx="3.3" cy="44.7" r="1.0" fill="#6a70b8"/><circle cx="4.3" cy="55.7" r="1.0" fill="#e8e0f0"/><circle cx="2.4" cy="40.8" r="0.8" fill="#6a70b8"/><circle cx="2.1" cy="31.6" r="0.6" fill="#4a50a0"/><circle cx="1.2" cy="63.7" r="0.9" fill="#e8e0f0"/><circle cx="0.5" cy="18.1" r="0.7" fill="#6a70b8"/><circle cx="1.9" cy="58.2" r="1.0" fill="#4a50a0"/><circle cx="0.8" cy="34.2" r="1.1" fill="#e8e0f0"/><circle cx="7.3" cy="2.9" r="0.7" fill="#4a50a0"/><circle cx="0.4" cy="43.2" r="1.1" fill="#4a50a0"/><circle cx="7.4" cy="26.8" r="1.1" fill="#e8e0f0"/><circle cx="4.8" cy="55.8" r="1.0" fill="#4a50a0"/><circle cx="0.8" cy="42.9" r="0.9" fill="#4a50a0"/><circle cx="0.3" cy="24.5" r="0.5" fill="#e8e0f0"/><circle cx="0.3" cy="52.7" r="1.1" fill="#4a50a0"/><circle cx="6.6" cy="29.4" r="0.8" fill="#6a70b8"/><circle cx="2.5" cy="14.6" r="1.1" fill="#6a70b8"/><circle cx="3.9" cy="29.4" r="1.1" fill="#6a70b8"/><circle cx="4.4" cy="46.0" r="0.6" fill="#4a50a0"/><circle cx="3.2" cy="19.5" r="1.2" fill="#6a70b8"/><circle cx="2.5" cy="68.6" r="0.7" fill="#6a70b8"/><circle cx="93.2" cy="30.4" r="1.5" fill="#7a2a60"/><circle cx="85.3" cy="29.7" r="2.1" fill="#c86aa8"/><circle cx="78.3" cy="22.7" r="1.7" fill="#c86aa8"/><circle cx="79.2" cy="22.9" r="1.5" fill="#d080b8"/><circle cx="77.1" cy="35.2" r="2.9" fill="#d080b8"/><circle cx="80.6" cy="22.4" r="1.9" fill="#d080b8"/><circle cx="69.7" cy="20.0" r="2.1" fill="#c86aa8"/><circle cx="74.4" cy="36.2" r="2.5" fill="#c86aa8"/><circle cx="93.8" cy="36.6" r="2.7" fill="#c86aa8"/><circle cx="85.1" cy="43.7" r="2.4" fill="#d080b8"/><circle cx="91.9" cy="42.9" r="1.8" fill="#c86aa8"/><circle cx="69.2" cy="28.8" r="1.7" fill="#d080b8"/><circle cx="90.9" cy="23.8" r="2.8" fill="#d080b8"/><circle cx="67.9" cy="36.0" r="2.3" fill="#d080b8"/><circle cx="89.7" cy="37.5" r="2.0" fill="#c86aa8"/><circle cx="78.0" cy="37.8" r="2.2" fill="#7a2a60"/><circle cx="78.7" cy="36.6" r="2.7" fill="#c86aa8"/><circle cx="90.7" cy="30.0" r="1.6" fill="#7a2a60"/><circle cx="78.2" cy="20.8" r="2.2" fill="#d080b8"/><circle cx="74.4" cy="39.6" r="1.6" fill="#d080b8"/><ellipse cx="84" cy="92" rx="4" ry="4" fill="#303040"/></g></g></svg></div>
<div class="op" style="left:1565px;top:804px">查看</div>
<div class="op" style="left:1628px;top:804px">修改</div>
<div class="op" style="left:1691px;top:804px">删除</div>
<div class="sep" style="top:871px"></div>
<div class="cb" style="top:924px"></div>
<div class="td" style="left:270px;top:920px">5</div>
<div class="td" style="left:320px;top:920px">做个真正的学生</div>
<div class="td" style="left:529px;top:920px">分类名称5</div>
<div class="td" style="left:738px;top:920px">发布人5</div>
<div class="td" style="left:947px;top:920px">5</div>
<div class="td" style="left:1156px;top:920px">5</div>
<div class="img" style="top:876px"><svg width="100" height="100" viewBox="0 0 100 100"><defs><filter id="b5" x="-10%" y="-10%" width="120%" height="120%"><feGaussianBlur stdDeviation="0.8"/></filter></defs><rect width="100" height="100" fill="#2a2a2c"/><g transform="translate(-2.5,-2.5) scale(1.05)"><g filter="url(#b5)"><path d="M0 0 L74 0 L74 30 L20 50 L0 42Z" fill="#b8b0c8"/><path d="M0 0 L40 0 L35 8 L0 12Z" fill="#c8a080"/><ellipse cx="48" cy="18" rx="6" ry="9" fill="#505050"/><rect x="76" y="0" width="24" height="14" fill="#d0c4b8"/><path d="M82 20 C88 14 100 16 100 20 L100 44 C94 46 86 44 83 36Z" fill="#3e7a6c"/><ellipse cx="94" cy="30" rx="4" ry="8" fill="#283838"/><path d="M0 52 L100 52 L100 100 L0 100Z" fill="#4a1818"/><path d="M10 100 L55 57 L70 52 L100 75 L100 100Z" fill="#c42020"/><path d="M18 100 L54 62 L92 86 L92 100Z" fill="#22909a"/><path d="M62 52 L100 52 L100 100 L80 100 C72 80 70 64 62 52Z" fill="#d8d0c0"/><path d="M58 52 L70 52 L90 72 L80 74Z" fill="#8a8aa0"/><circle cx="66.2" cy="32.6" r="1.7" fill="#e8e0f0"/><circle cx="67.8" cy="8.3" r="1.7" fill="#5058a0"/><circle cx="4.8" cy="17.5" r="1.7" fill="#5058a0"/><circle cx="24.0" cy="30.7" r="1.9" fill="#40b0b8"/><circle cx="10.6" cy="25.1" r="1.9" fill="#5058a0"/><circle cx="43.8" cy="30.8" r="1.0" fill="#c0b8d0"/><circle cx="2.7" cy="9.1" r="0.9" fill="#c0b8d0"/><circle cx="12.5" cy="39.2" r="0.8" fill="#d8a890"/><circle cx="3.6" cy="42.9" r="2.0" fill="#40b0b8"/><circle cx="41.1" cy="29.0" r="1.8" fill="#e8e0f0"/><circle cx="18.7" cy="26.8" r="1.8" fill="#8088c0"/><circle cx="59.0" cy="13.2" r="2.0" fill="#d8a890"/><circle cx="10.8" cy="16.5" r="0.8" fill="#5058a0"/><circle cx="13.1" cy="37.2" r="0.8" fill="#d8a890"/><circle cx="18.8" cy="32.0" r="2.0" fill="#d8a890"/><circle cx="16.4" cy="14.5" r="1.5" fill="#40b0b8"/><circle cx="9.8" cy="11.4" r="1.5" fill="#e8e0f0"/><circle cx="4.0" cy="28.4" r="1.1" fill="#d8a890"/><circle cx="26.4" cy="11.2" r="1.5" fill="#d8a890"/><circle cx="9.9" cy="18.3" r="1.8" fill="#5058a0"/><circle cx="18.0" cy="7.5" r="0.8" fill="#8088c0"/><circle cx="10.7" cy="33.3" r="1.1" fill="#c0b8d0"/><circle cx="71.6" cy="2.8" r="1.8" fill="#c0b8d0"/><circle cx="44.0" cy="28.9" r="1.5" fill="#d8a890"/><circle cx="54.3" cy="12.4" r="1.9" fill="#e8e0f0"/><circle cx="4.6" cy="1.3" r="0.9" fill="#5058a0"/><circle cx="4.3" cy="38.9" r="0.7" fill="#d8a890"/><circle cx="48.6" cy="9.9" r="1.2" fill="#d8a890"/><circle cx="45.0" cy="25.3" r="1.5" fill="#d8a890"/><circle cx="12.9" cy="15.5" r="1.1" fill="#e8e0f0"/><circle cx="35.4" cy="26.9" r="1.2" fill="#40b0b8"/><circle cx="55.1" cy="23.3" r="1.7" fill="#40b0b8"/><circle cx="19.3" cy="32.2" r="0.9" fill="#8088c0"/><circle cx="19.5" cy="2.6" r="1.5" fill="#8088c0"/><circle cx="32.3" cy="39.4" r="1.4" fill="#c0b8d0"/><circle cx="21.9" cy="46.4" r="1.9" fill="#e8e0f0"/><circle cx="65.1" cy="0.8" r="1.0" fill="#5058a0"/><circle cx="62.3" cy="10.1" r="0.9" fill="#c0b8d0"/><circle cx="14.2" cy="19.4" r="1.5" fill="#40b0b8"/><circle cx="67.2" cy="31.5" r="1.6" fill="#8088c0"/><circle cx="62.3" cy="26.8" r="1.3" fill="#d8a890"/><circle cx="32.4" cy="36.2" r="1.4" fill="#c0b8d0"/><circle cx="58.4" cy="19.6" r="1.5" fill="#d8a890"/><circle cx="67.4" cy="7.2" r="0.7" fill="#e8e0f0"/><circle cx="46.0" cy="8.1" r="2.0" fill="#8088c0"/><circle cx="2.1" cy="2.1" r="1.6" fill="#8088c0"/><circle cx="3.2" cy="3.4" r="0.8" fill="#d8a890"/><circle cx="56.4" cy="10.0" r="1.9" fill="#d8a890"/><circle cx="66.0" cy="3.3" r="1.8" fill="#8088c0"/><circle cx="69.9" cy="5.4" r="1.0" fill="#e8e0f0"/><circle cx="6.5" cy="37.6" r="1.5" fill="#40b0b8"/><circle cx="7.4" cy="4.9" r="1.7" fill="#5058a0"/><circle cx="21.8" cy="16.8" r="1.0" fill="#c0b8d0"/><circle cx="19.0" cy="14.1" r="1.6" fill="#c0b8d0"/><circle cx="44.5" cy="23.8" r="1.1" fill="#8088c0"/><circle cx="2.3" cy="20.6" r="1.3" fill="#e8e0f0"/><circle cx="25.7" cy="35.2" r="1.4" fill="#5058a0"/><circle cx="42.5" cy="14.4" r="1.3" fill="#d8a890"/><circle cx="15.0" cy="38.1" r="2.0" fill="#e8e0f0"/><circle cx="25.7" cy="4.8" r="1.6" fill="#5058a0"/><circle cx="71.6" cy="29.6" r="1.9" fill="#d8a890"/><circle cx="19.3" cy="47.2" r="1.1" fill="#5058a0"/><circle cx="69.4" cy="11.6" r="0.9" fill="#8088c0"/><circle cx="56.7" cy="24.5" r="2.0" fill="#d8a890"/><circle cx="58.2" cy="31.4" r="1.2" fill="#40b0b8"/><circle cx="55.1" cy="21.1" r="1.5" fill="#c0b8d0"/><circle cx="15.3" cy="13.2" r="1.9" fill="#d8a890"/><circle cx="9.4" cy="29.7" r="1.6" fill="#d8a890"/><circle cx="47.8" cy="17.4" r="1.1" fill="#5058a0"/><circle cx="64.2" cy="22.5" r="1.4" fill="#c0b8d0"/><circle cx="12.5" cy="21.9" r="1.7" fill="#d8a890"/><circle cx="17.1" cy="16.7" r="1.5" fill="#8088c0"/><circle cx="17.6" cy="9.6" r="1.1" fill="#8088c0"/><circle cx="61.2" cy="30.9" r="1.6" fill="#5058a0"/><circle cx="53.5" cy="30.1" r="1.2" fill="#5058a0"/><circle cx="24.3" cy="9.5" r="2.0" fill="#8088c0"/><circle cx="73.6" cy="8.2" r="1.6" fill="#5058a0"/><circle cx="32.2" cy="9.8" r="1.5" fill="#e8e0f0"/><circle cx="20.8" cy="44.3" r="1.3" fill="#e8e0f0"/><circle cx="29.5" cy="39.6" r="1.6" fill="#d8a890"/><circle cx="72.6" cy="14.8" r="0.7" fill="#c0b8d0"/><circle cx="44.7" cy="20.2" r="1.7" fill="#40b0b8"/><circle cx="51.9" cy="29.4" r="1.5" fill="#5058a0"/><circle cx="49.4" cy="32.6" r="1.8" fill="#8088c0"/><circle cx="50.3" cy="32.1" r="1.3" fill="#c0b8d0"/><circle cx="19.2" cy="35.0" r="1.9" fill="#5058a0"/><circle cx="57.9" cy="35.7" r="1.5" fill="#c0b8d0"/><circle cx="62.9" cy="24.1" r="0.7" fill="#40b0b8"/><circle cx="38.4" cy="33.1" r="1.8" fill="#8088c0"/><circle cx="24.3" cy="0.5" r="1.8" fill="#e8e0f0"/><circle cx="2.8" cy="27.2" r="0.9" fill="#5058a0"/><circle cx="38.4" cy="5.1" r="1.4" fill="#d8a890"/><circle cx="15.2" cy="23.8" r="0.7" fill="#c0b8d0"/><circle cx="38.6" cy="20.5" r="1.9" fill="#5058a0"/><circle cx="73.3" cy="9.2" r="1.4" fill="#e8e0f0"/><circle cx="54.0" cy="30.7" r="1.5" fill="#c0b8d0"/><circle cx="20.3" cy="20.0" r="0.7" fill="#40b0b8"/><circle cx="67.7" cy="31.4" r="1.6" fill="#d8a890"/><circle cx="19.6" cy="11.2" r="1.7" fill="#d8a890"/><circle cx="71.1" cy="23.1" r="0.9" fill="#e8e0f0"/><circle cx="59.9" cy="31.7" r="1.3" fill="#d8a890"/><circle cx="10.8" cy="33.3" r="1.8" fill="#40b0b8"/><circle cx="34.6" cy="14.7" r="1.4" fill="#5058a0"/><circle cx="57.7" cy="23.5" r="1.7" fill="#5058a0"/><circle cx="19.8" cy="18.8" r="1.0" fill="#40b0b8"/><circle cx="50.2" cy="24.1" r="1.7" fill="#c0b8d0"/><circle cx="26.5" cy="32.7" r="1.1" fill="#40b0b8"/><circle cx="31.7" cy="31.9" r="1.6" fill="#c0b8d0"/><circle cx="11.3" cy="15.2" r="1.2" fill="#e8e0f0"/><circle cx="58.0" cy="7.0" r="1.8" fill="#8088c0"/><circle cx="90.0" cy="9.2" r="1.2" fill="#e8e0d8"/><circle cx="91.7" cy="3.5" r="1.1" fill="#e8e0d8"/><circle cx="96.5" cy="2.6" r="1.5" fill="#e8e0d8"/><circle cx="81.0" cy="5.6" r="1.5" fill="#e8e0d8"/><circle cx="92.0" cy="12.5" r="1.8" fill="#b8b0a8"/><circle cx="80.7" cy="9.7" r="1.5" fill="#b8b0a8"/><circle cx="92.1" cy="1.6" r="1.1" fill="#b8b0a8"/><circle cx="81.6" cy="2.0" r="1.5" fill="#e8e0d8"/><circle cx="87.6" cy="12.7" r="1.7" fill="#e8e0d8"/><circle cx="88.0" cy="7.6" r="1.9" fill="#e8e0d8"/><circle cx="79.8" cy="4.5" r="1.7" fill="#b8b0a8"/><circle cx="92.0" cy="11.8" r="1.4" fill="#b8b0a8"/><circle cx="100.0" cy="9.5" r="1.2" fill="#b8b0a8"/><circle cx="91.3" cy="0.4" r="1.6" fill="#b8b0a8"/><circle cx="95.4" cy="1.3" r="1.5" fill="#e8e0d8"/><circle cx="76.8" cy="10.1" r="1.6" fill="#b8b0a8"/><circle cx="78.3" cy="9.2" r="1.3" fill="#e8e0d8"/><circle cx="82.8" cy="4.8" r="1.3" fill="#e8e0d8"/><circle cx="95.8" cy="4.1" r="1.8" fill="#b8b0a8"/><circle cx="84.0" cy="13.8" r="1.9" fill="#b8b0a8"/><circle cx="90.1" cy="86.9" r="1.3" fill="#1a6a80"/><circle cx="32.2" cy="89.1" r="0.7" fill="#60c8d0"/><circle cx="24.5" cy="99.9" r="1.0" fill="#60c8d0"/><circle cx="83.5" cy="82.7" r="0.6" fill="#1a6a80"/><circle cx="78.8" cy="80.1" r="1.3" fill="#40b8c8"/><circle cx="76.4" cy="96.6" r="1.2" fill="#60c8d0"/><circle cx="69.0" cy="95.3" r="0.7" fill="#40b8c8"/><circle cx="67.4" cy="79.4" r="1.3" fill="#40b8c8"/><circle cx="67.1" cy="95.0" r="1.0" fill="#40b8c8"/><circle cx="85.6" cy="86.9" r="0.9" fill="#40b8c8"/><circle cx="76.2" cy="83.4" r="0.8" fill="#1a6a80"/><circle cx="60.8" cy="96.7" r="1.0" fill="#60c8d0"/><circle cx="78.0" cy="83.9" r="1.4" fill="#1a6a80"/><circle cx="61.9" cy="99.7" r="1.2" fill="#40b8c8"/><circle cx="53.2" cy="77.7" r="0.7" fill="#60c8d0"/><circle cx="52.9" cy="96.0" r="1.2" fill="#1a6a80"/><circle cx="27.0" cy="98.7" r="0.7" fill="#40b8c8"/><circle cx="70.8" cy="94.5" r="1.3" fill="#40b8c8"/><circle cx="39.7" cy="83.2" r="1.0" fill="#60c8d0"/><circle cx="89.4" cy="89.3" r="0.6" fill="#40b8c8"/><circle cx="83.4" cy="88.1" r="1.2" fill="#1a6a80"/><circle cx="41.0" cy="89.7" r="0.7" fill="#1a6a80"/><circle cx="63.1" cy="74.0" r="1.5" fill="#60c8d0"/><circle cx="50.5" cy="87.7" r="0.7" fill="#40b8c8"/><circle cx="44.9" cy="86.5" r="1.2" fill="#1a6a80"/><circle cx="53.3" cy="91.6" r="1.0" fill="#1a6a80"/><circle cx="76.1" cy="83.5" r="0.9" fill="#40b8c8"/><circle cx="64.0" cy="86.7" r="1.3" fill="#60c8d0"/><circle cx="42.6" cy="85.0" r="1.5" fill="#40b8c8"/><circle cx="62.5" cy="73.7" r="1.0" fill="#40b8c8"/><circle cx="45.9" cy="88.0" r="1.1" fill="#40b8c8"/><circle cx="49.3" cy="84.3" r="1.3" fill="#40b8c8"/><circle cx="83.9" cy="99.7" r="0.7" fill="#60c8d0"/><circle cx="68.7" cy="96.7" r="0.9" fill="#40b8c8"/><circle cx="58.0" cy="80.4" r="0.9" fill="#60c8d0"/><circle cx="62.9" cy="87.8" r="1.0" fill="#40b8c8"/><circle cx="86.5" cy="84.3" r="0.6" fill="#1a6a80"/><circle cx="52.0" cy="65.3" r="1.3" fill="#40b8c8"/><circle cx="35.2" cy="84.0" r="1.4" fill="#60c8d0"/><circle cx="41.8" cy="81.2" r="0.8" fill="#40b8c8"/><circle cx="69.3" cy="60.7" r="2.6" fill="#d8d0c0"/><circle cx="84.0" cy="69.2" r="2.7" fill="#f0e8e0"/><circle cx="80.7" cy="93.6" r="2.1" fill="#d8d0c0"/><circle cx="91.9" cy="59.5" r="2.4" fill="#d8d0c0"/><circle cx="95.1" cy="79.1" r="2.4" fill="#f0e8e0"/><circle cx="91.2" cy="91.3" r="2.9" fill="#d8d0c0"/><circle cx="94.1" cy="68.3" r="3.0" fill="#d8d0c0"/><circle cx="65.2" cy="54.4" r="2.3" fill="#b8b0a0"/><circle cx="79.4" cy="97.5" r="2.9" fill="#f0e8e0"/><circle cx="94.8" cy="82.7" r="2.9" fill="#b8b0a0"/><circle cx="98.5" cy="64.3" r="2.3" fill="#b8b0a0"/><circle cx="81.2" cy="60.8" r="2.8" fill="#d8d0c0"/><circle cx="98.7" cy="99.6" r="1.8" fill="#f0e8e0"/><circle cx="97.8" cy="97.2" r="1.6" fill="#b8b0a0"/><circle cx="96.4" cy="92.2" r="1.6" fill="#b8b0a0"/><circle cx="89.0" cy="83.0" r="3.0" fill="#f0e8e0"/><circle cx="90.4" cy="80.3" r="2.2" fill="#b8b0a0"/><circle cx="71.8" cy="58.0" r="2.2" fill="#f0e8e0"/><circle cx="78.8" cy="90.8" r="2.9" fill="#f0e8e0"/><circle cx="79.8" cy="95.8" r="2.7" fill="#f0e8e0"/><circle cx="97.3" cy="62.6" r="2.9" fill="#d8d0c0"/><circle cx="95.8" cy="58.7" r="2.2" fill="#f0e8e0"/><circle cx="97.2" cy="70.5" r="1.5" fill="#f0e8e0"/><circle cx="79.2" cy="68.3" r="2.7" fill="#d8d0c0"/><circle cx="95.8" cy="73.1" r="1.7" fill="#d8d0c0"/><path d="M5 68 L50 54" stroke="#e0d8c8" stroke-width="0.8" stroke-dasharray="1 2"/></g></g></svg></div>
<div class="op" style="left:1565px;top:919px">查看</div>
<div class="op" style="left:1628px;top:919px">修改</div>
<div class="op" style="left:1691px;top:919px">删除</div>

<svg class="a" style="left:539px;top:100px" width="16" height="24" viewBox="0 0 16 24"><path d="M2.4 2.6 L2.4 18.6 L6.4 15 L8.7 20.2 L11.4 19 L9.4 14.5 L13.6 14.4 Z" fill="#fff" stroke="#111" stroke-width="1.1" stroke-linejoin="miter"/></svg>
</body></html>
